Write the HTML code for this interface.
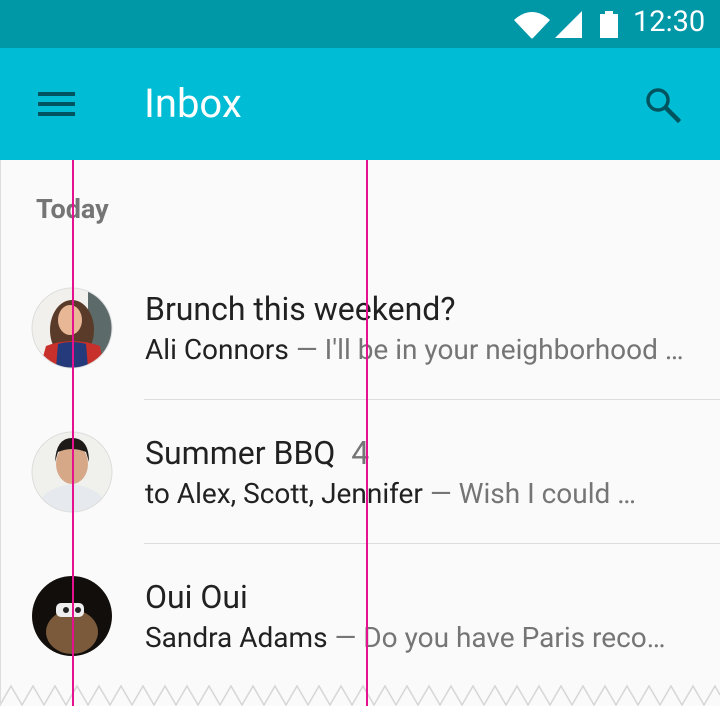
<!DOCTYPE html>
<html><head><style>
*{margin:0;padding:0;box-sizing:border-box}
body{width:720px;height:706px;overflow:hidden;background:#fafafa;font-family:"Roboto","Liberation Sans",sans-serif;position:relative}
.abs{position:absolute}
.t{position:absolute;white-space:nowrap;line-height:1.15}
.p{font-size:32px;color:#212121;left:145px}
.s{font-size:28px;color:#212121;left:145px}
.g{color:#757575}
.div{position:absolute;left:144px;right:0;height:1px;background:#dcdcdc}
</style></head><body>
<div class="abs" style="left:0;top:0;width:720px;height:48px;background:#0097a7"></div>
<div class="abs" style="left:0;top:48px;width:720px;height:112px;background:#00bcd4"></div>
<svg class="abs" style="left:0;top:0" width="720" height="160">
<path d="M514 20 Q532 4 550 20 L533 38 Q532 39 531 38 Z" fill="#fff"/>
<path d="M555 38 L582 11 L582 38 Z" fill="#fff"/>
<rect x="600" y="14" width="18" height="24" fill="#fff"/><rect x="605" y="11" width="8" height="4" fill="#fff"/>
<rect x="38" y="92" width="37" height="4" fill="#00545f"/><rect x="38" y="102" width="37" height="4" fill="#00545f"/><rect x="38" y="112" width="37" height="4" fill="#00545f"/>
<circle cx="658" cy="100" r="10" fill="none" stroke="#00545f" stroke-width="3.5"/><path d="M666 108 L678 120" stroke="#00545f" stroke-width="4.5" stroke-linecap="square"/>
</svg>
<div class="t" style="left:633px;top:6px;font-size:29px;color:#fff">12:30</div>
<div class="t" style="left:144px;top:81px;font-size:40px;color:#fff">Inbox</div>
<div class="t" style="left:36px;top:194px;font-size:27px;font-weight:bold;color:#757575">Today</div>

<svg class="abs" style="left:0;top:0" width="720" height="706">
<defs>
<clipPath id="c1"><circle cx="72" cy="328" r="40"/></clipPath>
<clipPath id="c2"><circle cx="72" cy="472" r="40"/></clipPath>
<clipPath id="c3"><circle cx="72" cy="616" r="40"/></clipPath>
</defs>
<g clip-path="url(#c1)">
<rect x="32" y="288" width="80" height="80" fill="#f2f0ec"/>
<rect x="88" y="288" width="24" height="80" fill="#5d6a6a"/>
<ellipse cx="72" cy="330" rx="22" ry="30" fill="#5a3a28"/>
<ellipse cx="70" cy="320" rx="12" ry="15" fill="#e8b896"/>
<path d="M40 368 L46 346 Q72 336 100 346 L104 368 Z" fill="#c8302c"/>
<path d="M56 368 L58 344 Q72 340 86 344 L88 368 Z" fill="#243a7a"/>
</g>
<circle cx="72" cy="328" r="40" fill="none" stroke="#ddd" stroke-width="1"/>
<g clip-path="url(#c2)">
<rect x="32" y="432" width="80" height="80" fill="#f0f0ec"/>
<ellipse cx="72" cy="464" rx="16" ry="20" fill="#d6a888"/>
<path d="M55 462 Q56 438 72 438 Q89 438 89 462 L86 452 Q72 446 58 452 Z" fill="#1e1a18"/>
<path d="M34 512 Q40 488 72 484 Q104 488 110 512 Z" fill="#e6eaee"/>
</g>
<circle cx="72" cy="472" r="40" fill="none" stroke="#ddd" stroke-width="1"/>
<g clip-path="url(#c3)">
<rect x="32" y="576" width="80" height="80" fill="#120e0c"/>
<ellipse cx="72" cy="632" rx="26" ry="22" fill="#7a5a3a"/>
<rect x="56" y="603" width="28" height="14" fill="#eee" rx="5"/>
<circle cx="66" cy="610" r="3" fill="#222"/><circle cx="78" cy="610" r="3" fill="#222"/>
</g>
<path d="M0 706 L0 705 L11 686 L22 705 L33 686 L44 705 L55 686 L66 705 L77 686 L88 705 L99 686 L110 705 L121 686 L132 705 L143 686 L154 705 L165 686 L176 705 L187 686 L198 705 L209 686 L220 705 L231 686 L242 705 L253 686 L264 705 L275 686 L286 705 L297 686 L308 705 L319 686 L330 705 L341 686 L352 705 L363 686 L374 705 L385 686 L396 705 L407 686 L418 705 L429 686 L440 705 L451 686 L462 705 L473 686 L484 705 L495 686 L506 705 L517 686 L528 705 L539 686 L550 705 L561 686 L572 705 L583 686 L594 705 L605 686 L616 705 L627 686 L638 705 L649 686 L660 705 L671 686 L682 705 L693 686 L704 705 L715 686 L720 695" fill="none" stroke="#d6d6d6" stroke-width="1.5"/>
</svg>

<div class="t p" style="top:291px">Brunch this weekend?</div>
<div class="t s" style="top:334px">Ali Connors <span class="g">— I'll be in your neighborhood …</span></div>
<div class="div" style="top:399px"></div>
<div class="t p" style="top:435px">Summer BBQ <span class="g">&nbsp;4</span></div>
<div class="t s" style="top:478px">to Alex, Scott, Jennifer <span class="g">— Wish I could …</span></div>
<div class="div" style="top:543px"></div>
<div class="t p" style="top:579px">Oui Oui</div>
<div class="t s" style="top:622px">Sandra Adams <span class="g">— Do you have Paris reco…</span></div>

<div class="abs" style="left:0;top:160px;width:1px;height:546px;background:#ddd"></div>
<div class="abs" style="left:72px;top:160px;width:2px;height:546px;background:#e5118e"></div>
<div class="abs" style="left:366px;top:160px;width:2px;height:546px;background:#e5118e"></div>
</body></html>
